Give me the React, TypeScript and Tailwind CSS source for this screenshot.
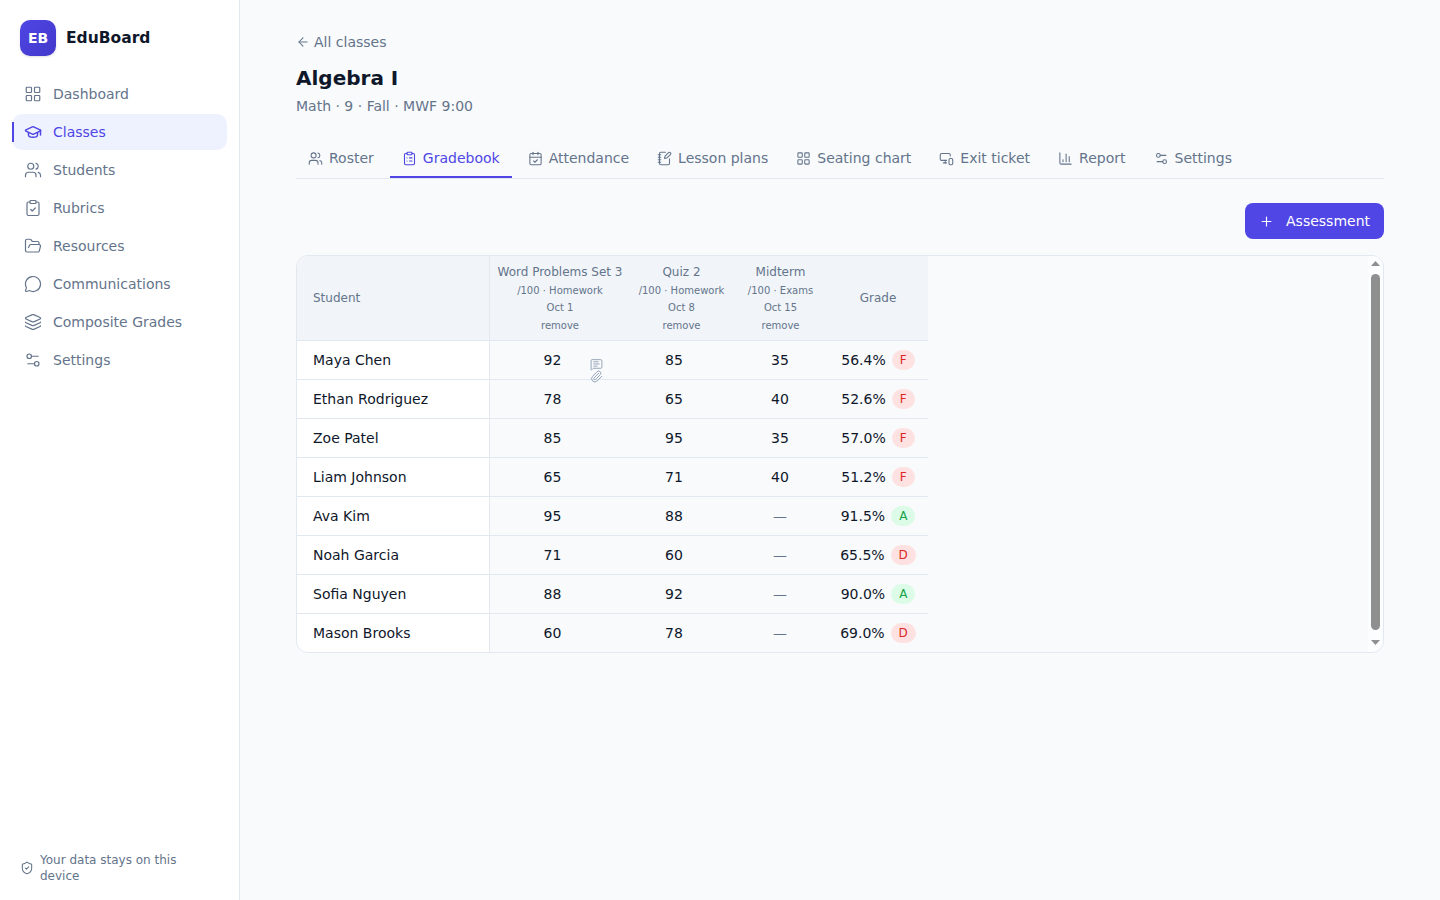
import {
  LayoutGrid, GraduationCap, Users, ClipboardCheck, FolderOpen, MessageCircle, Layers, Settings2,
  ClipboardList, CalendarCheck, NotebookPen, MonitorSmartphone, ChartColumn, ShieldCheck, ArrowLeft, Plus,
  MessageSquareText, Paperclip,
} from "lucide-react";

const nav = [
  { label: "Dashboard", Icon: LayoutGrid },
  { label: "Classes", Icon: GraduationCap, active: true },
  { label: "Students", Icon: Users },
  { label: "Rubrics", Icon: ClipboardCheck },
  { label: "Resources", Icon: FolderOpen },
  { label: "Communications", Icon: MessageCircle },
  { label: "Composite Grades", Icon: Layers },
  { label: "Settings", Icon: Settings2 },
];

const tabs = [
  { label: "Roster", Icon: Users },
  { label: "Gradebook", Icon: ClipboardList, active: true },
  { label: "Attendance", Icon: CalendarCheck },
  { label: "Lesson plans", Icon: NotebookPen },
  { label: "Seating chart", Icon: LayoutGrid },
  { label: "Exit ticket", Icon: MonitorSmartphone },
  { label: "Report", Icon: ChartColumn },
  { label: "Settings", Icon: Settings2 },
];

const assessments = [
  { title: "Word Problems Set 3", meta: "/100 · Homework", date: "Oct 1", w: "w-[140px]" },
  { title: "Quiz 2", meta: "/100 · Homework", date: "Oct 8", w: "w-[102px] pl-[1px]" },
  { title: "Midterm", meta: "/100 · Exams", date: "Oct 15", w: "w-[96px] pl-[1px]" },
];

const rows = [
  { name: "Maya Chen", a: "92", b: "85", c: "35", pct: "56.4%", g: "F" },
  { name: "Ethan Rodriguez", a: "78", b: "65", c: "40", pct: "52.6%", g: "F" },
  { name: "Zoe Patel", a: "85", b: "95", c: "35", pct: "57.0%", g: "F" },
  { name: "Liam Johnson", a: "65", b: "71", c: "40", pct: "51.2%", g: "F" },
  { name: "Ava Kim", a: "95", b: "88", c: "—", pct: "91.5%", g: "A" },
  { name: "Noah Garcia", a: "71", b: "60", c: "—", pct: "65.5%", g: "D" },
  { name: "Sofia Nguyen", a: "88", b: "92", c: "—", pct: "90.0%", g: "A" },
  { name: "Mason Brooks", a: "60", b: "78", c: "—", pct: "69.0%", g: "D" },
];

export default function App() {
  return (
    <div className="flex h-[900px] w-full overflow-hidden bg-[#f8fafc] font-['DejaVu_Sans',sans-serif] text-[14px] text-[#0f172a]">
      <aside className="flex w-[240px] shrink-0 flex-col border-r border-[#e2e8f0] bg-white">
        <div className="flex items-center gap-[10px] px-[20px] pt-[20px]">
          <div className="flex h-[36px] w-[36px] items-center justify-center rounded-[10px] bg-gradient-to-br from-[#4f46e5] to-[#4338ca] text-[14px] font-bold text-white shadow-sm">
            EB
          </div>
          <span className="mt-[1px] text-[15.5px] font-bold text-[#0f172a]">EduBoard</span>
        </div>
        <nav className="mt-[20px] flex flex-col gap-[2px] px-[12px]">
          {nav.map(({ label, Icon, active }) => (
            <div
              key={label}
              className={
                active
                  ? "relative flex h-[36px] items-center gap-[11px] rounded-[10px] bg-[#eef2ff] pl-[12px] text-[#4f46e5]"
                  : "relative flex h-[36px] items-center gap-[11px] rounded-[10px] pl-[12px] text-[#64748b]"
              }
            >
              {active && <span className="absolute left-0 top-[8px] h-[20px] w-[2px] bg-[#4f46e5]" />}
              <Icon size={18} strokeWidth={active ? 2 : 1.6} />
              <span>{label}</span>
            </div>
          ))}
        </nav>
        <div className="mt-auto flex items-center gap-[6px] pb-[16px] pl-[20px] pr-[40px] text-[12px] leading-[16px] text-[#64748b]">
          <ShieldCheck size={14} strokeWidth={1.8} className="shrink-0" />
          <span>Your data stays on this device</span>
        </div>
      </aside>

      <main className="min-w-0 flex-1 px-[56px] pt-[32px]">
        <div className="flex h-[20px] items-center gap-[4px] text-[#64748b]">
          <ArrowLeft size={14} strokeWidth={1.8} />
          <span>All classes</span>
        </div>
        <h1 className="mt-[10px] text-[20px] font-bold leading-[32px] text-[#0f172a]">Algebra I</h1>
        <p className="mt-[2px] leading-[20px] text-[#64748b]">Math · 9 · Fall · MWF 9:00</p>

        <div className="mt-[24px] flex gap-[4px] border-b border-[#e2e8f0]">
          {tabs.map(({ label, Icon, active }) => (
            <div
              key={label}
              className={
                active
                  ? "flex h-[38px] items-center gap-[6px] border-b-2 border-[#4f46e5] px-[12px] pt-[1px] text-[#4f46e5]"
                  : "flex h-[38px] items-center gap-[6px] border-b-2 border-transparent px-[12px] pt-[1px] text-[#64748b]"
              }
            >
              <Icon size={15} strokeWidth={1.7} />
              <span>{label}</span>
            </div>
          ))}
        </div>

        <div className="mt-[24px] flex justify-end">
          <button className="flex h-[36px] items-center gap-[12px] rounded-[8px] bg-[#4f46e5] pl-[14px] pr-[14px] text-white">
            <Plus size={15} strokeWidth={1.8} />
            <span>Assessment</span>
          </button>
        </div>

        <div className="relative mt-[16px] h-[398px] overflow-hidden rounded-[12px] border border-[#e2e8f0]">
          <table className="w-[631px] table-fixed border-separate border-spacing-0">
            <thead>
              <tr className="bg-[#f1f5f9] text-[#64748b]">
                <th className="h-[85px] w-[193px] border-b border-r border-[#e2e8f0] pl-[16px] text-left text-[12px] font-normal">
                  Student
                </th>
                {assessments.map((x) => (
                  <th key={x.title} className={`${x.w} border-b border-[#e2e8f0] text-center font-normal`}>
                    <div className="text-[12px] leading-[16px]">{x.title}</div>
                    <div className="mt-[3px] text-[10px] leading-[15px]">{x.meta}</div>
                    <div className="mt-[2px] text-[10px] leading-[15px]">{x.date}</div>
                    <div className="mt-[3px] text-[10px] leading-[15px]">remove</div>
                  </th>
                ))}
                <th className="border-b border-[#e2e8f0] text-center text-[12px] font-normal">Grade</th>
              </tr>
            </thead>
            <tbody>
              {rows.map((r, i) => {
                const line = i < 7 ? "border-b border-b-[#e2e8f0]" : "border-b border-b-transparent";
                return (
                  <tr key={r.name}>
                    <td className={`h-[39px] border-r border-r-[#e2e8f0] bg-white pl-[16px] ${line}`}>{r.name}</td>
                    <td className={`relative pr-[15px] text-center ${line}`}>
                      {r.a}
                      {i === 0 && (
                        <span className="absolute left-[100px] top-[17px] flex flex-col items-center text-[#94a3b8]">
                          <MessageSquareText size={13} strokeWidth={1.8} />
                          <Paperclip size={13} strokeWidth={1.8} className="-mt-[1px]" />
                        </span>
                      )}
                    </td>
                    <td className={`pr-[14px] text-center ${line}`}>{r.b}</td>
                    <td className={`text-center ${r.c === "—" ? "text-[#64748b]" : ""} ${line}`}>{r.c}</td>
                    <td className={line}>
                      <div className="flex items-center justify-center gap-[6px]">
                        <span>{r.pct}</span>
                        <span
                          className={
                            r.g === "A"
                              ? "flex h-[20px] items-center rounded-full bg-[#dcfce7] px-[8px] text-[12px] text-[#16a34a]"
                              : "flex h-[20px] items-center rounded-full bg-[#fee2e2] px-[8px] text-[12px] text-[#dc2626]"
                          }
                        >
                          {r.g}
                        </span>
                      </div>
                    </td>
                  </tr>
                );
              })}
            </tbody>
          </table>

          <div className="absolute bottom-0 right-0 top-0 flex w-[15px] flex-col items-center bg-[#fcfdfe] py-[5px]">
            <svg width="9" height="5" viewBox="0 0 9 5" className="shrink-0 text-[#8f8f8f]" fill="currentColor">
              <path d="M4.5 0 L9 5 L0 5 Z" />
            </svg>
            <div className="mt-[8px] h-[356px] w-[9px] shrink-0 rounded-full bg-[#8f8f8f]" />
            <svg width="9" height="5" viewBox="0 0 9 5" className="mt-[10px] shrink-0 text-[#8f8f8f]" fill="currentColor">
              <path d="M0 0 L9 0 L4.5 5 Z" />
            </svg>
          </div>
        </div>
      </main>
    </div>
  );
}
